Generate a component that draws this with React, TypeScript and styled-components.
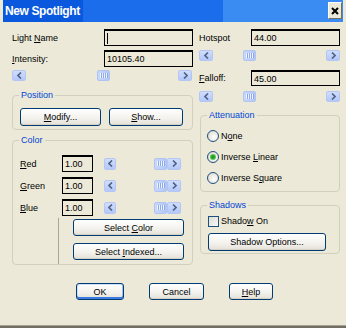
import React from "react";
import styled, { createGlobalStyle } from "styled-components";

const Global = createGlobalStyle`
  html, body { margin: 0; padding: 0; background: #ECE9D8; }
  body { font-family: "Liberation Sans", Arial, sans-serif; font-size: 9px; color: #000; }
  * { box-sizing: border-box; }
  u { text-decoration: underline; text-underline-offset: 1px; }
`;

const Dialog = styled.div`
  width: 346px;
  height: 328px;
  background: #ECE9D8;
  display: flex;
  flex-direction: column;
  overflow: hidden;
`;

const TitleBar = styled.div`
  flex: none;
  height: 22px;
  margin: 0 3px;
  padding: 0 1px 0 2px;
  display: flex;
  align-items: flex-start;
  justify-content: space-between;
  background: linear-gradient(
    to right,
    #0A58DE 0,
    #0A58DE 23.5%,
    #1C6DEC 23.5%,
    #1C6DEC 64.7%,
    #3A8CF3 64.7%
  );
`;

const TitleText = styled.span`
  font: bold 12px "Liberation Sans", Arial, sans-serif;
  letter-spacing: -0.4px;
  color: #fff;
  line-height: 23px;
`;

const CloseButton = styled.div`
  margin-top: 2px;
  width: 14px;
  height: 17px;
  background: #ECE9D8;
  border: 1px solid;
  border-color: #fff #716F64 #716F64 #fff;
  display: flex;
  align-items: center;
  justify-content: center;
`;

const Columns = styled.div`
  display: flex;
  gap: 6px;
  padding: 7px 0 0 12px;
`;

const Column = styled.div<{ $w: number }>`
  width: ${(p) => p.$w}px;
  display: flex;
  flex-direction: column;
`;

const FieldRow = styled.div<{ $h?: number; $mt?: number }>`
  height: ${(p) => p.$h ?? 17}px;
  margin-top: ${(p) => p.$mt ?? 0}px;
  display: flex;
  align-items: center;
  justify-content: space-between;
`;

const Label = styled.span<{ $w?: number }>`
  white-space: nowrap;
  ${(p) => (p.$w ? `width: ${p.$w}px; flex: none;` : "")}
`;

const TextBox = styled.div<{ $w: number; $h?: number }>`
  width: ${(p) => p.$w}px;
  height: ${(p) => p.$h ?? 17}px;
  flex: none;
  border: 1px solid #000;
  border-top-width: 2px;
  background: #ECE9D8;
  padding: 0 2px;
  display: flex;
  align-items: center;
  white-space: nowrap;
`;

const Caret = styled.span`
  width: 1px;
  height: 11px;
  background: #000;
`;

const ScrollWrap = styled.div<{ $w: number; $h?: number; $mt?: number; $ml?: number }>`
  width: ${(p) => p.$w}px;
  height: ${(p) => p.$h ?? 11}px;
  margin-top: ${(p) => p.$mt ?? 0}px;
  margin-left: ${(p) => p.$ml ?? 0}px;
  flex: none;
  display: flex;
`;

const ScrollButton = styled.div<{ $w?: number }>`
  width: ${(p) => p.$w ?? 14}px;
  flex: none;
  border: 1px solid #B4C7F4;
  border-radius: 2px;
  background: linear-gradient(#D0DDFD, #B4C8F8);
  display: flex;
  align-items: center;
  justify-content: center;
`;

const Track = styled.div`
  flex: 1;
  display: flex;
`;

const Thumb = styled.div`
  width: 13px;
  flex: none;
  border: 1px solid #B0C4F3;
  border-radius: 2px;
  background: linear-gradient(to right, #C8D8FC, #B2C7F8);
  display: flex;
  align-items: center;
  justify-content: center;
  gap: 1px;
`;

const Grip = styled.span`
  width: 1px;
  height: 5px;
  background: #EEF3FE;
  box-shadow: 1px 0 0 #8DAAE8;
`;

const Arrow = ({ dir }: { dir: "l" | "r" }) => (
  <svg width="5" height="7" viewBox="0 0 5 7">
    <path
      d={dir === "l" ? "M4 0.5 L1 3.5 L4 6.5" : "M1 0.5 L4 3.5 L1 6.5"}
      fill="none"
      stroke="#4D6185"
      strokeWidth="1.6"
    />
  </svg>
);

type ScrollProps = {
  width: number;
  value: number;
  height?: number;
  mt?: number;
  ml?: number;
  leftW?: number;
};

const ScrollBar = ({ width, value, height, mt, ml, leftW = 14 }: ScrollProps) => {
  const trackW = width - leftW - 14;
  const offset = Math.round((trackW - 13) * value);
  return (
    <ScrollWrap $w={width} $h={height} $mt={mt} $ml={ml}>
      <ScrollButton $w={leftW}>
        <Arrow dir="l" />
      </ScrollButton>
      <Track>
        <span style={{ width: offset, flex: "none" }} />
        <Thumb>
          <Grip />
          <Grip />
          <Grip />
          <Grip />
        </Thumb>
      </Track>
      <ScrollButton>
        <Arrow dir="r" />
      </ScrollButton>
    </ScrollWrap>
  );
};

const Group = styled.div<{ $h: number; $mt: number; $ml?: number; $pt: number; $pl: number }>`
  position: relative;
  height: ${(p) => p.$h}px;
  margin-top: ${(p) => p.$mt}px;
  margin-left: ${(p) => p.$ml ?? 0}px;
  padding: ${(p) => p.$pt}px 0 0 ${(p) => p.$pl}px;
  border: 1px solid #D0D0BF;
  border-radius: 4px;
  flex: none;
`;

const Legend = styled.span`
  position: absolute;
  top: -6px;
  left: 6px;
  padding: 0 2px;
  line-height: 11px;
  background: #ECE9D8;
  color: #0046D5;
`;

const Button = styled.div<{ $w: number; $h?: number; $default?: boolean }>`
  width: ${(p) => p.$w}px;
  height: ${(p) => p.$h ?? 17}px;
  flex: none;
  border: 1px solid #003C74;
  border-radius: 3px;
  background: linear-gradient(#FFFFFF, #F2F1EC 60%, #E3E0D6);
  display: flex;
  align-items: center;
  justify-content: center;
  white-space: nowrap;
  box-shadow: ${(p) =>
    p.$default
      ? "inset 0 -2px 0 #3D7BE0, inset -1px 0 0 #9CC0F0, inset 1px 1px 0 #CEE0FA"
      : "inset 0 -1px 0 #D6D0C5"};
`;

const Caption = styled.span`
  white-space: pre;
`;

const ButtonPair = styled.div`
  display: flex;
  gap: 8px;
`;

const ColorRows = styled.div`
  display: flex;
  flex-direction: column;
  gap: 5px;
`;

const ColorRow = styled.div`
  height: 17px;
  display: flex;
  align-items: center;
`;

const BottomArea = styled.div`
  display: flex;
  margin: 2px 0 0 38px;
`;

const SwatchEdge = styled.div`
  width: 1px;
  height: 46px;
  background: #A7A698;
  flex: none;
`;

const ButtonStack = styled.div`
  margin: 1px 0 0 14px;
  display: flex;
  flex-direction: column;
  gap: 7px;
`;

const OptionList = styled.div`
  display: flex;
  flex-direction: column;
  gap: 9px;
`;

const Option = styled.div`
  height: 12px;
  display: flex;
  align-items: center;
  gap: 2px;
  white-space: nowrap;
`;

const RadioCircle = styled.span<{ $on?: boolean }>`
  width: 12px;
  height: 12px;
  flex: none;
  border: 1px solid #1C5180;
  border-radius: 50%;
  background: radial-gradient(circle at 60% 60%, #FFFFFF 0, #E9E7DE 55%, #CFCCBF 100%);
  display: flex;
  align-items: center;
  justify-content: center;
  &::after {
    content: "";
    display: ${(p) => (p.$on ? "block" : "none")};
    width: 4px;
    height: 4px;
    border-radius: 50%;
    background: #21A121;
    box-shadow: 0 0 0 1px #5CC45C;
  }
`;

const CheckBox = styled.span`
  width: 11px;
  height: 11px;
  flex: none;
  border: 1px solid #1C5180;
  background: linear-gradient(135deg, #DCDBD3, #F8F8F6);
`;

const ShadowBody = styled.div`
  display: flex;
  flex-direction: column;
  gap: 6px;
`;

const FooterButtons = styled.div`
  margin-top: 18px;
  padding-left: 76px;
  display: flex;
  gap: 25px;
`;

const BottomEdge = styled.div`
  margin-top: auto;
  height: 3px;
  flex: none;
  border-top: 1px solid #A5A294;
  background: #716F64;
`;

const colorRows = [
  { key: "R", rest: "ed", value: "1.00" },
  { key: "G", rest: "reen", value: "1.00" },
  { key: "B", rest: "lue", value: "1.00" },
];

export default function App() {
  return (
    <>
      <Global />
      <Dialog>
        <TitleBar>
          <TitleText>New Spotlight</TitleText>
          <CloseButton>
            <svg width="8" height="8" viewBox="0 0 8 8">
              <path d="M1 1 L7 7 M7 1 L1 7" stroke="#000" strokeWidth="2" />
            </svg>
          </CloseButton>
        </TitleBar>

        <Columns>
          <Column $w={181}>
            <FieldRow>
              <Label>
                Light <u>N</u>ame
              </Label>
              <TextBox $w={89}>
                <Caret />
              </TextBox>
            </FieldRow>
            <FieldRow $mt={4}>
              <Label>
                <u>I</u>ntensity:
              </Label>
              <TextBox $w={89}>10105.40</TextBox>
            </FieldRow>
            <ScrollBar width={180} value={0.51} mt={3} />

            <Group $h={35} $mt={14} $pt={12} $pl={7}>
              <Legend>Position</Legend>
              <ButtonPair>
                <Button $w={81} $h={18}>
                  <Caption>
                    <u>M</u>odify...
                  </Caption>
                </Button>
                <Button $w={74} $h={18}>
                  <Caption>
                    <u>S</u>how...
                  </Caption>
                </Button>
              </ButtonPair>
            </Group>

            <Group $h={125} $mt={10} $pt={14} $pl={7}>
              <Legend>Color</Legend>
              <ColorRows>
                {colorRows.map((r) => (
                  <ColorRow key={r.key}>
                    <Label $w={42}>
                      <u>{r.key}</u>
                      {r.rest}
                    </Label>
                    <TextBox $w={31}>{r.value}</TextBox>
                    <ScrollBar width={77} value={1} height={12} ml={11} leftW={12} />
                  </ColorRow>
                ))}
              </ColorRows>
              <BottomArea>
                <SwatchEdge />
                <ButtonStack>
                  <Button $w={111}>
                    <Caption>
                      Select <u>C</u>olor
                    </Caption>
                  </Button>
                  <Button $w={111}>
                    <Caption>
                      Select <u>I</u>ndexed...
                    </Caption>
                  </Button>
                </ButtonStack>
              </BottomArea>
            </Group>
          </Column>

          <Column $w={141}>
            <FieldRow>
              <Label>Hotspot</Label>
              <TextBox $w={89}>44.00</TextBox>
            </FieldRow>
            <ScrollBar width={141} value={0.3} mt={4} />
            <FieldRow $h={16} $mt={9}>
              <Label>
                <u>F</u>alloff:
              </Label>
              <TextBox $w={89} $h={16}>
                45.00
              </TextBox>
            </FieldRow>
            <ScrollBar width={141} value={0.3} mt={5} />

            <Group $h={77} $mt={13} $ml={1} $pt={14} $pl={6}>
              <Legend>Attenuation</Legend>
              <OptionList>
                <Option>
                  <RadioCircle />
                  <Caption>
                    N<u>o</u>ne
                  </Caption>
                </Option>
                <Option>
                  <RadioCircle $on />
                  <Caption>
                    Inverse <u>L</u>inear
                  </Caption>
                </Option>
                <Option>
                  <RadioCircle />
                  <Caption>
                    Inverse S<u>q</u>uare
                  </Caption>
                </Option>
              </OptionList>
            </Group>

            <Group $h={49} $mt={13} $ml={1} $pt={9} $pl={7}>
              <Legend>Shadows</Legend>
              <ShadowBody>
                <Option>
                  <CheckBox />
                  <Caption>
                    Shado<u>w</u> On
                  </Caption>
                </Option>
                <Button $w={118} $h={18}>
                  <Caption>Shadow Options...</Caption>
                </Button>
              </ShadowBody>
            </Group>
          </Column>
        </Columns>

        <FooterButtons>
          <Button $w={48} $default>
            <Caption>OK</Caption>
          </Button>
          <Button $w={55}>
            <Caption>Cancel</Caption>
          </Button>
          <Button $w={44}>
            <Caption>
              <u>H</u>elp
            </Caption>
          </Button>
        </FooterButtons>

        <BottomEdge />
      </Dialog>
    </>
  );
}
